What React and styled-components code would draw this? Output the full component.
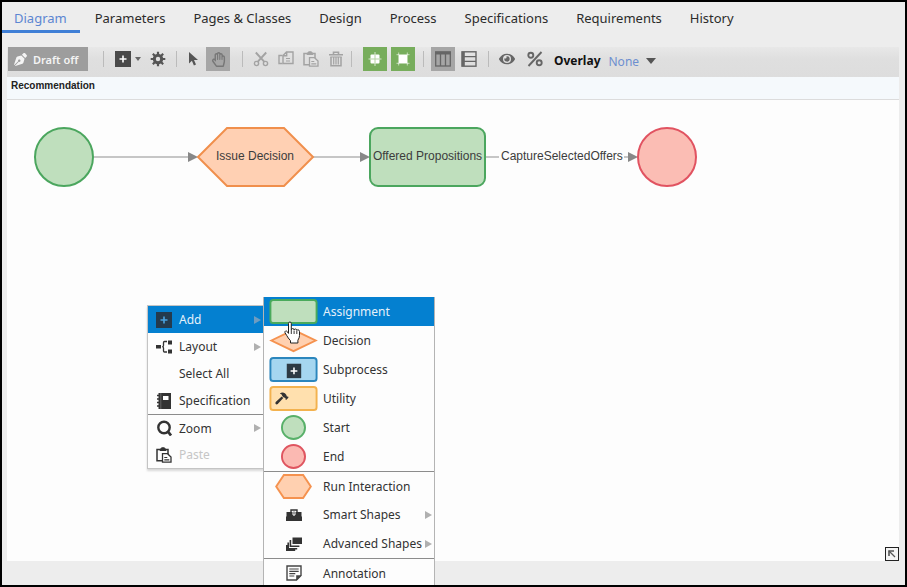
import React from 'react';
import styled, { createGlobalStyle, css } from 'styled-components';
import { FaEye, FaHammer, FaPenNib, FaRegHandPaper } from 'react-icons/fa';

const GlobalStyle = createGlobalStyle`
  *, *::before, *::after {
    box-sizing: border-box;
  }

  body {
    margin: 0;
    background: #ededed;
    color: #2b2b2b;
    font-family: 'Noto Sans', 'Open Sans', sans-serif;
    font-size: 13px;
  }

  button, select {
    font: inherit;
    color: inherit;
  }
`;

const Icon = ({ size = 16, height, children, ...rest }) => (
  <svg width={size} height={height || size} viewBox={`0 0 ${size} ${height || size}`} fill="none" aria-hidden="true" {...rest}>
    {children}
  </svg>
);

const PlusIcon = ({ color = '#4a4a4a', cross = '#fff' }) => (
  <Icon>
    <rect width="16" height="16" fill={color} />
    <path d="M8 4.5v7M4.5 8h7" stroke={cross} strokeWidth="1.6" />
  </Icon>
);

const GearIcon = () => (
  <Icon stroke="#555">
    <circle cx="8" cy="8" r="3.7" strokeWidth="3" />
    {[0, 45, 90, 135].map((angle) => (
      <path key={angle} d="M8 .7v3M8 12.3v3" strokeWidth="2.2" transform={`rotate(${angle} 8 8)`} />
    ))}
  </Icon>
);

const ArrowIcon = () => (
  <Icon>
    <path d="M3 1v11.5l2.9-2.7 2 4.7 2.1-.9-2-4.5H12z" fill="#555" />
  </Icon>
);

const CutIcon = () => (
  <Icon stroke="#a3a3a3">
    <circle cx="3.5" cy="12.5" r="2.1" strokeWidth="1.4" />
    <circle cx="12.5" cy="12.5" r="2.1" strokeWidth="1.4" />
    <path d="M2.8 1.5 11.4 10.8M13.2 1.5 4.6 10.8" strokeWidth="1.9" />
  </Icon>
);

const CopyIcon = () => (
  <Icon stroke="#a3a3a3" strokeWidth="1.4">
    <path d="M4.500 12.500H1V4.500h3.500" />
    <path d="M8.500 1H15v11.500H5V4.500zM8.700 1.200v3.600H5.200" />
    <path d="M8 7.500h4M8 10h4" strokeWidth="1" />
  </Icon>
);

const PasteIcon = ({ color = '#a3a3a3', paper = '#e3e3e3' }) => (
  <Icon stroke={color} strokeWidth="1.5">
    <path d="M6 13.8H1V2.5h11V7" />
    <path d="M4 3.5V2h1.6V.8h2.8V2H10v1.5z" fill={color} strokeWidth="1" />
    <path d="M6.5 6.7h5l3.5 3.3v5.2H6.5z" fill={paper} strokeWidth="1.3" />
    <path d="M8.3 10.5h3M8.3 12.8h5" strokeWidth="1.2" />
  </Icon>
);

const TrashIcon = () => (
  <Icon stroke="#a3a3a3">
    <path d="M1 3.7h14M5.5 3V1.2h5V3" strokeWidth="1.6" />
    <path d="M3 6v8.8h10V6" strokeWidth="1.5" />
    <path d="M5.7 6v7.5M8 6v7.5M10.3 6v7.5" strokeWidth="1.2" />
    <path d="M2.3 6h11.4" strokeWidth="1" />
  </Icon>
);

const SnapIcon = () => (
  <Icon>
    <rect x="3.5" y="3.5" width="9" height="9" rx="1" fill="#fff" />
    <path d="M8 3.5v9M3.5 8h9" stroke="#b5d3a3" />
    <path d="M8 1v2.5M8 12.5V15M1.5 8h2M12.5 8h2" stroke="#fff" strokeOpacity=".7" />
  </Icon>
);

const AlignIcon = () => (
  <Icon>
    <rect x="4" y="4" width="8" height="8" fill="#fff" />
    <path d="M1.5 3.7h13M1.5 12.3h13M3.7 1.5v13M12.3 1.5v13" stroke="#fff" strokeOpacity=".6" />
  </Icon>
);

const ColumnsIcon = () => (
  <Icon stroke="#666">
    <rect x=".7" y="1" width="14.6" height="14" strokeWidth="1.3" />
    <path d="M0 2h16" strokeWidth="3" />
    <path d="M5.5 2v13M10.5 2v13" strokeWidth="1.3" />
  </Icon>
);

const RowsIcon = () => (
  <Icon stroke="#666">
    <rect x="1" y=".8" width="14" height="14.4" strokeWidth="1.4" />
    <path d="M2.3 1v14" strokeWidth="3" />
    <path d="M3 5.6h12M3 10.4h12" strokeWidth="1.4" />
  </Icon>
);

const PercentIcon = () => (
  <Icon stroke="#666" strokeWidth="1.9">
    <circle cx="3.8" cy="4.2" r="2.5" />
    <circle cx="12.2" cy="11.8" r="2.5" />
    <path d="M14.5 1 1.5 15" />
  </Icon>
);

const LayoutIcon = () => (
  <Icon>
    <path d="M0 6h5v3.5H0zM12 1.5h4.5v4H12zM12 10.5h4.5v4H12z" fill="#333" />
    <path d="M11 2.5H8.5q-1 0-1 1v3q0 1.2-1.3 1.2 1.3 0 1.3 1.3v3q0 1 1 1H11" stroke="#333" strokeWidth="1.3" />
  </Icon>
);

const BookIcon = () => (
  <Icon>
    <path d="M2.5 0H15v16H2.5z" fill="#333" />
    <path d="M1 2.5h3M1 6h3M1 9.5h3M1 13h3" stroke="#333" strokeWidth="1.5" />
    <path d="M7 3h5.5v4H7z" fill="#fff" />
    <path d="M4.8 0v16" stroke="#888" strokeWidth=".6" />
  </Icon>
);

const SearchIcon = () => (
  <Icon stroke="#333">
    <circle cx="8" cy="7.5" r="5.7" strokeWidth="2.4" />
    <path d="m11.5 11 3.5 4.5" strokeWidth="2.8" />
  </Icon>
);

const ToolboxIcon = () => (
  <Icon>
    <path d="M5 5V3h6v2" stroke="#333" strokeWidth="1.4" />
    <path d="M.5 5h15v4.5H.5zM0 9.5h16V14H0z" fill="#333" />
    <path d="M6.5 4.5h3v3.2L8 9 6.5 7.7z" fill="#fff" />
    <path d="M7.5 4.5h1v3h-1z" fill="#333" />
  </Icon>
);

const StackIcon = () => (
  <Icon>
    <path d="M6.5 1.5H16V8H6.5z" fill="#333" />
    <path d="M4.4 4v6.3h9M2.2 6.5v6.2h9M.7 9v5.3h8.5" stroke="#333" strokeWidth="1.6" />
  </Icon>
);

const NoteIcon = () => (
  <Icon>
    <path d="M1 1h14v9.5L10.5 15H1z" stroke="#444" strokeWidth="1.4" />
    <path d="M10.2 15.5v-5.3h5.3z" fill="#444" />
    <path d="M3.3 4h9.4M3.3 6.3h9.4M3.3 8.6h6M3.3 11h5" stroke="#444" strokeWidth="1.2" />
  </Icon>
);

const tileShapes = {
  assignment: <rect x="1" y="1" width="48" height="24" rx="3" fill="#bfdfbd" stroke="#4aaa5c" strokeWidth="2" />,
  decision: <path d="M2 13 25 2l23 11-23 11z" fill="#ffd0b0" stroke="#f5924f" strokeWidth="2" />,
  subprocess: (
    <>
      <rect x="1" y="1" width="48" height="24" rx="3" fill="#a5d6f0" stroke="#2b86bd" strokeWidth="2" />
      <path d="M18 7h15v15H18z" fill="#2d3a44" />
      <path d="M25.5 11v7M22 14.5h7" stroke="#fff" strokeWidth="1.6" />
    </>
  ),
  utility: (
    <>
      <rect x="1" y="1" width="48" height="24" rx="3" fill="#ffe0ae" stroke="#f3b24e" strokeWidth="2" />
      <FaHammer x="6" y="6" size="14" color="#333" />
    </>
  ),
  start: <circle cx="25" cy="13" r="12" fill="#bfdfbd" stroke="#58b069" strokeWidth="2" />,
  end: <circle cx="25" cy="13" r="12" fill="#fbb9b2" stroke="#df5560" strokeWidth="2" />,
  interaction: <path d="M7 13 15 1h20l8 12-8 12H15z" fill="#ffd0b0" stroke="#f5924f" strokeWidth="2" />,
};

const Tile = ({ kind }) => (
  <svg width="49" height="25" viewBox="0 0 50 26" fill="none" aria-hidden="true">
    {tileShapes[kind]}
  </svg>
);

const TABS = [
  'Diagram',
  'Parameters',
  'Pages & Classes',
  'Design',
  'Process',
  'Specifications',
  'Requirements',
  'History',
];

const CONTEXT_ITEMS = [
  { label: 'Add', icon: <PlusIcon color="#243a4d" cross="#4aa3e0" />, active: true, more: true },
  { label: 'Layout', icon: <LayoutIcon />, more: true },
  { label: 'Select All' },
  { label: 'Specification', icon: <BookIcon /> },
  { label: 'Zoom', icon: <SearchIcon />, more: true, divided: true },
  { label: 'Paste', icon: <PasteIcon color="#333" paper="#fff" />, disabled: true },
];

const ADD_ITEMS = [
  { label: 'Assignment', icon: <Tile kind="assignment" />, active: true },
  { label: 'Decision', icon: <Tile kind="decision" /> },
  { label: 'Subprocess', icon: <Tile kind="subprocess" /> },
  { label: 'Utility', icon: <Tile kind="utility" /> },
  { label: 'Start', icon: <Tile kind="start" /> },
  { label: 'End', icon: <Tile kind="end" /> },
  { label: 'Run Interaction', icon: <Tile kind="interaction" />, divided: true },
  { label: 'Smart Shapes', icon: <ToolboxIcon />, more: true },
  { label: 'Advanced Shapes', icon: <StackIcon />, more: true },
  { label: 'Annotation', icon: <NoteIcon />, divided: true },
];

function MenuItems({ items, tall }) {
  return items.map(({ label, icon, active, more, divided, disabled }) => (
    <MenuItem key={label} type="button" role="menuitem" disabled={disabled} $active={active} $divided={divided} $tall={tall}>
      <MenuIcon $tall={tall}>{icon}</MenuIcon>
      <span>{label}</span>
      {more && (
        <MoreArrow width="7" height="8" viewBox="0 0 7 8" $active={active} aria-hidden="true">
          <path d="M0 0l7 4-7 4z" />
        </MoreArrow>
      )}
    </MenuItem>
  ));
}

export default function App() {
  return (
    <Frame>
      <GlobalStyle />
      <TabBar>
        {TABS.map((tab, i) => (
          <Tab key={tab} href={`#tab-${i}`} $active={i === 0}>{tab}</Tab>
        ))}
      </TabBar>

      <Workspace>
        <Toolbar>
          <DraftButton type="button">
            <FaPenNib size={13} />
            Draft off
          </DraftButton>
          <Separator $before={15} $after={6} />
          <ToolButton type="button" aria-label="Add shape" $wide>
            <PlusIcon />
            <svg width="6" height="4" viewBox="0 0 6 4" aria-hidden="true"><path d="M0 0h6L3 4z" fill="#666" /></svg>
          </ToolButton>
          <ToolButton type="button" aria-label="Settings"><GearIcon /></ToolButton>
          <Separator $before={6} $after={5} />
          <ToolButton type="button" aria-label="Select"><ArrowIcon /></ToolButton>
          <ToolButton type="button" aria-label="Pan" $tone="pressed"><FaRegHandPaper size={15} color="#777" /></ToolButton>
          <Separator $before={12} $after={6} />
          <ToolGroup $gap={1}>
            <ToolButton type="button" aria-label="Cut"><CutIcon /></ToolButton>
            <ToolButton type="button" aria-label="Copy"><CopyIcon /></ToolButton>
            <ToolButton type="button" aria-label="Paste"><PasteIcon /></ToolButton>
            <ToolButton type="button" aria-label="Delete"><TrashIcon /></ToolButton>
          </ToolGroup>
          <Separator $before={3} $after={11} />
          <ToolGroup $gap={4}>
            <ToolButton type="button" aria-label="Snap to grid" $tone="green"><SnapIcon /></ToolButton>
            <ToolButton type="button" aria-label="Snap to shapes" $tone="green"><AlignIcon /></ToolButton>
          </ToolGroup>
          <Separator $before={8} $after={7} />
          <ToolGroup $gap={2}>
            <ToolButton type="button" aria-label="Vertical lanes" $tone="pressed"><ColumnsIcon /></ToolButton>
            <ToolButton type="button" aria-label="Horizontal lanes"><RowsIcon /></ToolButton>
          </ToolGroup>
          <Separator $before={7} $after={6} />
          <ToolGroup $gap={4}>
            <ToolButton type="button" aria-label="Preview"><FaEye size={16} color="#666" /></ToolButton>
            <ToolButton type="button" aria-label="Percentages"><PercentIcon /></ToolButton>
          </ToolGroup>
          <OverlayLabel htmlFor="overlay">Overlay</OverlayLabel>
          <OverlaySelect id="overlay" defaultValue="None">
            <option>None</option>
          </OverlaySelect>
          <svg width="10" height="30" viewBox="0 0 10 30" aria-hidden="true"><path d="M0 11h10l-5 6z" fill="#555" /></svg>
        </Toolbar>

        <FlowTitle>Recommendation</FlowTitle>

        <Canvas>
          <Diagram width="700" height="120" viewBox="0 0 700 120" fill="none" aria-hidden="true">
            <g stroke="#b4b4b4" strokeWidth="1.5">
              <path d="M87 57h96M306 57h50M479 57h13M617 57h6" />
            </g>
            <path d="M181 52l10 5-10 5zM353 52l10 5-10 5zM621 52l10 5-10 5z" fill="#888" />
            <circle cx="57" cy="57" r="29" fill="#bfdfbd" stroke="#4ba65e" strokeWidth="2" />
            <path d="M191 57 220 28h57l29 29-29 29h-57z" fill="#ffd0b3" stroke="#f08f4c" strokeWidth="2" />
            <rect x="363" y="28" width="115" height="58" rx="8" fill="#bfdfbd" stroke="#4ba65e" strokeWidth="2" />
            <circle cx="660" cy="57" r="29" fill="#fbbdb4" stroke="#e15361" strokeWidth="2" />
          </Diagram>
          <NodeLabel $x={190} $width={116}>Issue Decision</NodeLabel>
          <NodeLabel $x={362} $width={117}>Offered Propositions</NodeLabel>
          <NodeLabel $x={494} $width={120}>CaptureSelectedOffers</NodeLabel>
          <ExpandButton type="button" aria-label="Expand">
            <svg width="10" height="10" viewBox="0 0 10 10" fill="none" stroke="#555" aria-hidden="true">
              <path d="M2 7V2h5" strokeWidth="1.6" />
              <path d="m2 2 6 6" strokeWidth="1.3" />
            </svg>
          </ExpandButton>

          <ContextMenu role="menu">
            <MenuItems items={CONTEXT_ITEMS} />
            <Submenu role="menu">
              <MenuItems items={ADD_ITEMS} tall />
            </Submenu>
            <Pointer width="18" height="24" viewBox="0 0 18 24" aria-hidden="true">
              <path
                d="M4.5 2.500q0-1.500 1.400-1.500t1.400 1.500v6.300q0-1.200 1.400-1.200t1.400 1.300q.2-1 1.400-.9 1.300.1 1.300 1.400.3-.7 1.300-.6 1.400.2 1.400 1.800v4q0 2.200-1.600 4.600V22H6.500v-2.300Q4 17 2.600 14.300L1 11.700q-.4-1.200.6-1.700 1-.3 1.700.7l1.200 1.700z"
                fill="#fff"
                stroke="#222"
              />
              <path d="M7.3 9v4M10.1 9.500V13M12.8 10v3" stroke="#222" strokeWidth=".9" />
            </Pointer>
          </ContextMenu>
        </Canvas>
      </Workspace>
    </Frame>
  );
}

const Frame = styled.div`
  display: flex;
  flex-direction: column;
  height: 100vh;
  overflow: hidden;
  border: 2px solid #000;
  background: #ededed;
`;

const TabBar = styled.nav`
  display: flex;
  flex: none;
  gap: 2px;
  height: 31px;
`;

const Tab = styled.a`
  padding: 0 13px 0 12px;
  line-height: 33px;
  color: #2b2b2b;
  text-decoration: none;
  white-space: nowrap;

  & + & {
    padding-left: 13px;
  }

  ${({ $active }) => $active && css`
    color: #5c86d2;
    border-bottom: 3px solid #3f7fd6;
  `}
`;

const Workspace = styled.main`
  display: flex;
  flex-direction: column;
  flex: 1;
  min-height: 0;
  padding: 14px 6px 24px 5px;
`;

const Toolbar = styled.div`
  display: flex;
  flex: none;
  height: 30px;
  padding-left: 1px;
  background: linear-gradient(#e8e8e8, #dfdfdf 40%, #dddddd);
`;

const ToolGroup = styled.div`
  display: flex;
  gap: ${({ $gap }) => $gap}px;
`;

const DraftButton = styled.button`
  display: flex;
  align-items: center;
  gap: 6px;
  width: 80px;
  height: 24px;
  padding: 0 6px;
  border: 0;
  background: #9d9d9d;
  color: #f4f4f4;
  font-size: 11px;
  font-weight: 600;
  white-space: nowrap;
`;

const TONES = {
  pressed: '#a6a6a6',
  green: '#77ad5c',
};

const ToolButton = styled.button`
  display: flex;
  align-items: center;
  justify-content: center;
  gap: 4px;
  width: ${({ $wide }) => ($wide ? 36 : 24)}px;
  height: 24px;
  padding: 0;
  border: 0;
  background: ${({ $tone }) => TONES[$tone] || 'transparent'};
`;

const Separator = styled.span`
  width: 1px;
  height: 16px;
  margin: 4px ${({ $after }) => $after}px 0 ${({ $before }) => $before}px;
  background: #bbb;
`;

const OverlayLabel = styled.label`
  margin: 0 8px 0 7px;
  color: #111;
  font-size: 12px;
  font-weight: 700;
  line-height: 28px;
`;

const OverlaySelect = styled.select`
  width: 37px;
  height: 28px;
  padding: 0;
  border: 0;
  appearance: none;
  background: transparent;
  color: #6d8fd0;
  font-size: 12px;
`;

const FlowTitle = styled.h1`
  flex: none;
  height: 23px;
  margin: 0;
  padding-left: 4px;
  border-bottom: 1px solid #dcdcdc;
  background: #f5f9fc;
  color: #222;
  font: bold 10px/17px 'Liberation Sans', Arial, sans-serif;
`;

const Canvas = styled.section`
  position: relative;
  flex: 1;
  background: #fdfdfd;
`;

const Diagram = styled.svg`
  display: block;
`;

const NodeLabel = styled.span`
  position: absolute;
  top: 48px;
  left: ${({ $x }) => $x}px;
  width: ${({ $width }) => $width}px;
  color: #3c3c3c;
  font: 12px/16px 'Liberation Sans', Arial, sans-serif;
  text-align: center;
  white-space: nowrap;
`;

const ExpandButton = styled.button`
  position: absolute;
  right: 0;
  bottom: 0;
  display: flex;
  align-items: center;
  justify-content: center;
  width: 14px;
  height: 14px;
  padding: 0;
  border: 1px solid #222;
  background: #f4f4f4;
`;

const ContextMenu = styled.div`
  position: absolute;
  top: 205px;
  left: 140px;
  width: 117px;
  border: 1px solid #c4c4c4;
  background: #fdfdfd;
  box-shadow: 0 2px 2px rgba(0, 0, 0, 0.15);
  font-size: 12px;
`;

const Submenu = styled.div`
  position: absolute;
  top: -9px;
  left: 115px;
  width: 172px;
  border: solid #b4b4b4;
  border-width: 0 1px;
  background: #fdfdfd;
`;

const MenuItem = styled.button`
  display: flex;
  align-items: center;
  width: 100%;
  height: ${({ $tall }) => ($tall ? 29 : 27)}px;
  padding: 0 2px 0 0;
  border: 0;
  background: transparent;
  color: #333;
  text-align: left;
  white-space: nowrap;

  ${({ $divided }) => $divided && css`
    border-top: 1px solid #8c8c8c;
  `}

  ${({ $active }) => $active && css`
    background: #0480d0;
    color: #e4f1fa;
  `}

  &:disabled {
    color: #c6c6c6;
  }
`;

const MenuIcon = styled.span`
  display: flex;
  flex: none;
  justify-content: center;
  width: ${({ $tall }) => ($tall ? 59 : 31)}px;
`;

const MoreArrow = styled.svg`
  flex: none;
  margin-left: auto;
  fill: ${({ $active }) => ($active ? '#6f9cc0' : '#b0b0b0')};
`;

const Pointer = styled.svg`
  position: absolute;
  top: 15px;
  left: 136px;
`;
